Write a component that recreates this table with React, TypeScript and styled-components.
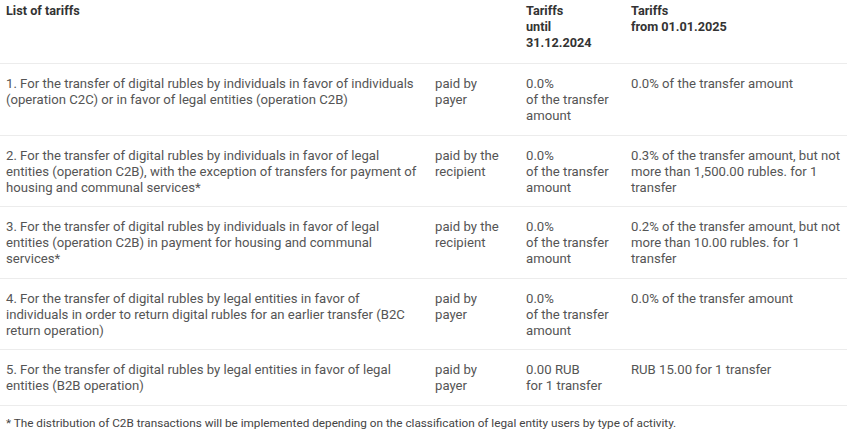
import React from "react";
import styled, { createGlobalStyle } from "styled-components";

const Global = createGlobalStyle`
  html, body { margin: 0; padding: 0; background: #fff; }
  body { font-family: "Roboto", "Open Sans", sans-serif; }
`;

const Page = styled.div`
  width: 847px;
  background: #fff;
`;

const Row = styled.div<{ $head?: boolean }>`
  display: grid;
  grid-template-columns: 429px 91px 105px 1fr;
  border-bottom: 1px solid #ececec;
  padding: ${(p) => (p.$head ? "3px 0 12px" : "12px 0 10.5px")};
  font-size: ${(p) => (p.$head ? "12.7px" : "13.15px")};
  line-height: 16px;
  color: ${(p) => (p.$head ? "#333" : "#555")};
  font-weight: ${(p) => (p.$head ? 700 : 400)};
`;

const Cell = styled.div`
  padding: 0 4px 0 6px;
  white-space: pre;
`;

const Note = styled.div`
  padding: 9px 6px 0;
  font-size: 11.75px;
  line-height: 16px;
  color: #444;
`;

const rows: [string, string, string, string][] = [
  [
    "1. For the transfer of digital rubles by individuals in favor of individuals\n(operation C2C) or in favor of legal entities (operation C2B)",
    "paid by\npayer",
    "0.0%\nof the transfer\namount",
    "0.0% of the transfer amount",
  ],
  [
    "2. For the transfer of digital rubles by individuals in favor of legal\nentities (operation C2B), with the exception of transfers for payment of\nhousing and communal services*",
    "paid by the\nrecipient",
    "0.0%\nof the transfer\namount",
    "0.3% of the transfer amount, but not\nmore than 1,500.00 rubles. for 1\ntransfer",
  ],
  [
    "3. For the transfer of digital rubles by individuals in favor of legal\nentities (operation C2B) in payment for housing and communal\nservices*",
    "paid by the\nrecipient",
    "0.0%\nof the transfer\namount",
    "0.2% of the transfer amount, but not\nmore than 10.00 rubles. for 1\ntransfer",
  ],
  [
    "4. For the transfer of digital rubles by legal entities in favor of\nindividuals in order to return digital rubles for an earlier transfer (B2C\nreturn operation)",
    "paid by\npayer",
    "0.0%\nof the transfer\namount",
    "0.0% of the transfer amount",
  ],
  [
    "5. For the transfer of digital rubles by legal entities in favor of legal\nentities (B2B operation)",
    "paid by\npayer",
    "0.00 RUB\nfor 1 transfer",
    "RUB 15.00 for 1 transfer",
  ],
];

export default function App() {
  return (
    <Page>
      <Global />
      <Row $head>
        <Cell>List of tariffs</Cell>
        <Cell />
        <Cell>{"Tariffs\nuntil\n31.12.2024"}</Cell>
        <Cell>{"Tariffs\nfrom 01.01.2025"}</Cell>
      </Row>
      {rows.map((r, i) => (
        <Row key={i}>
          {r.map((c, j) => (
            <Cell key={j}>{c}</Cell>
          ))}
        </Row>
      ))}
      <Note>
        * The distribution of C2B transactions will be implemented depending on the classification of legal entity users by type of activity.
      </Note>
    </Page>
  );
}
